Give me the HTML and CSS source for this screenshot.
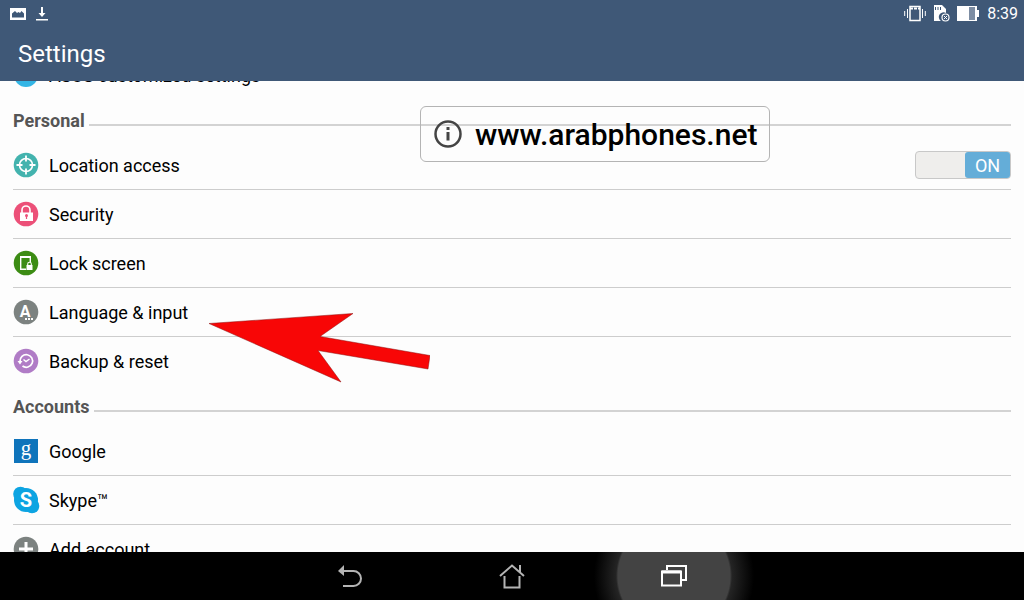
FILE: index.html
```html
<!DOCTYPE html>
<html lang="en">
<head>
    <meta charset="UTF-8">
    <meta name="viewport" content="width=device-width, initial-scale=1.0">
    <title>Settings</title>
    <link rel="stylesheet" href="styles.css">
</head>
<body>
<header class="header">
    <div class="status-bar">
        <div class="status-group">
            <svg width="16" height="12" viewBox="0 0 16 12"><path fill="#fff" fill-rule="evenodd" d="M0 0h16v12H0zM2 8.500V5.500L5 3l2 2 1.500-1L10 5l1.500-2L14 5.500v4H2z"/></svg>
            <svg width="12" height="14" viewBox="0 0 12 14"><path fill="#fff" d="M5 0h2v6h2.500L6 10 2.500 6H5zM0 12h12v1.500H0z"/></svg>
        </div>
        <div class="status-group status-right">
            <svg width="22" height="17" viewBox="0 0 22 17" fill="none" stroke="#fff">
                <rect x="6" y="1.500" width="10" height="14" stroke-width="1.500"/>
                <path d="M6 3.500h10" stroke-width="2" stroke-dasharray="3 1"/>
                <path d="M3.500 4v9M18.500 4v9M.7 6v5M21.300 6v5"/>
            </svg>
            <svg width="17" height="17" viewBox="0 0 17 17">
                <path fill="#fff" d="M1 0h8l4 4v4a4.500 4.500 0 0 0-5 8H1z"/>
                <path stroke="#3f5877" d="M2.500 2v3M5 2v3M7.500 2v3"/>
                <circle cx="12.500" cy="12.500" r="3.500" fill="none" stroke="#fff" stroke-width="1.200"/>
                <path stroke="#fff" d="M11 11l3 3M14 11l-3 3"/>
            </svg>
            <svg width="23" height="15" viewBox="0 0 23 15"><path fill="#fff" d="M0 0h20v4h2v7h-2v4H0z"/><path fill="#7d8da3" d="M12 1h6v13h-6z"/></svg>
            <time class="clock">8:39</time>
        </div>
    </div>
    <h1 class="title">Settings</h1>
</header>

<main class="content">
    <div class="list">
        <a class="row" href="#">
            <svg class="icon" viewBox="0 0 26 26"><circle cx="13" cy="13" r="12" fill="#33b5e5"/></svg>
            ASUS customized settings
        </a>

        <h2 class="section">Personal</h2>
        <div class="row">
            <svg class="icon" viewBox="0 0 26 26">
                <circle cx="13" cy="13" r="12.300" fill="#43b3ae"/>
                <circle cx="13" cy="13" r="6.500" fill="none" stroke="#fff" stroke-width="1.600"/>
                <path stroke="#fff" stroke-width="1.800" d="M13 3.500v6M13 16.500v6M3.500 13h6M16.500 13h6"/>
            </svg>
            <label for="location">Location access</label>
            <label class="switch">
                <input type="checkbox" id="location" checked>
                <span class="switch-thumb">ON</span>
            </label>
        </div>
        <a class="row" href="#">
            <svg class="icon" viewBox="0 0 26 26">
                <circle cx="13" cy="13" r="12.300" fill="#ec5078"/>
                <path fill="none" stroke="#fff" stroke-width="1.600" d="M9 12V9a4 4 0 0 1 8 0v3"/>
                <rect x="7" y="11.500" width="13" height="8.500" fill="#fff"/>
                <circle cx="13.500" cy="14.500" r="1.500" fill="#ec5078"/>
                <path stroke="#ec5078" stroke-width="1.200" d="M13.500 15v3"/>
            </svg>
            Security
        </a>
        <a class="row" href="#">
            <svg class="icon" viewBox="0 0 26 26">
                <circle cx="13" cy="13" r="12.300" fill="#3c8c14"/>
                <path fill="none" stroke="#fff" stroke-width="1.400" d="M13 19.300H7.700V6.700h9.600V12"/>
                <path stroke="#fff" stroke-width="2" d="M7.500 7h10"/>
                <path fill="none" stroke="#fff" stroke-width="1.100" d="M14.700 15v-1a1.800 1.800 0 0 1 3.600 0v1"/>
                <rect x="13.500" y="15" width="6" height="5" fill="#fff"/>
            </svg>
            Lock screen
        </a>
        <a class="row" href="#">
            <svg class="icon" viewBox="0 0 26 26">
                <circle cx="13" cy="13" r="12.300" fill="#7c8280"/>
                <text class="letter" x="12" y="18" font-size="16">A</text>
                <path stroke="#fff" stroke-width="2" stroke-dasharray="2 1" d="M12 20h8"/>
            </svg>
            Language &amp; input
        </a>
        <a class="row last" href="#">
            <svg class="icon" viewBox="0 0 26 26">
                <circle cx="13" cy="13" r="12.300" fill="#b07cc6"/>
                <path fill="none" stroke="#fff" stroke-width="1.700" d="M7 13.500a6.300 6.300 0 1 1 2.500 4.500"/>
                <path fill="#fff" d="M4.500 13h5L7 16.500z"/>
                <path fill="none" stroke="#fff" stroke-width="1.500" d="M10.500 11.500l2.500 2 3.500-2.500"/>
            </svg>
            Backup &amp; reset
        </a>

        <h2 class="section">Accounts</h2>
        <a class="row" href="#">
            <svg class="icon" viewBox="0 0 26 26">
                <rect x="1" y="1" width="24" height="24" fill="#0f74bb"/>
                <text class="letter serif" x="13" y="17" font-size="21">g</text>
            </svg>
            Google
        </a>
        <a class="row" href="#">
            <svg class="icon" viewBox="0 0 26 26">
                <circle cx="13" cy="13" r="12" fill="#0da4e2"/>
                <circle cx="7.500" cy="7" r="7.300" fill="#0da4e2"/>
                <circle cx="19" cy="19" r="7.300" fill="#0da4e2"/>
                <text class="letter" x="13" y="20" font-size="20">S</text>
            </svg>
            Skype™
        </a>
        <a class="row last" href="#">
            <svg class="icon" viewBox="0 0 26 26">
                <circle cx="13" cy="13" r="12.300" fill="#7c8280"/>
                <path stroke="#fff" stroke-width="3" d="M13 6v14M6 13h14"/>
            </svg>
            Add account
        </a>
    </div>
</main>

<nav class="nav-bar">
    <button class="nav-button" aria-label="Back">
        <svg width="26" height="24" viewBox="0 0 26 24"><path fill="#b4b4b4" d="M1 7l6-6v11z"/><path fill="none" stroke="#b4b4b4" stroke-width="2" d="M6 7h10.500a7.500 7.500 0 0 1 0 15H6"/></svg>
    </button>
    <button class="nav-button" aria-label="Home">
        <svg width="26" height="26" viewBox="0 0 26 26" fill="none" stroke="#b4b4b4" stroke-width="2"><path d="M1 13L13 2.500 25 13M21 9V2M5.500 13v11.500h15V13"/></svg>
    </button>
    <button class="nav-button active" aria-label="Recent apps">
        <svg width="26" height="22" viewBox="0 0 26 22" fill="none" stroke="#fff" stroke-width="2"><path d="M6 5V1h19v14h-4"/><rect x="1" y="6.500" width="19" height="14"/><path d="M1 7h19" stroke-width="3"/></svg>
    </button>
</nav>

<div class="watermark">
    <svg width="28" height="28" viewBox="0 0 28 28"><circle cx="14" cy="14" r="12.500" fill="none" stroke="#444" stroke-width="2.500"/><path stroke="#444" stroke-width="3" d="M14 7v3M14 12v8.500"/></svg>
    www.arabphones.net
</div>
<svg class="arrow" width="222" height="70" viewBox="0 0 222 70"><path fill="#f80606" stroke="#8b1010" stroke-width=".5" d="M1 10.500L145 .5 112 23.500 222 42.500 220 56 110 37.500 133 69z"/></svg>
</body>
</html>
```
FILE: styles.css
```css
* {
    box-sizing: border-box;
}
body {
    font-family: Roboto, sans-serif;
    margin: 0;
    height: 100vh;
    display: flex;
    flex-direction: column;
    position: relative;
    overflow: hidden;
    background-color: #fdfdfd;
    color: #000;
}
.header {
    background-color: #3f5877;
    color: #fff;
    z-index: 1;
}
.status-bar {
    display: flex;
    justify-content: space-between;
    height: 27px;
    padding: 0 6px 0 10px;
}
.status-group {
    display: flex;
    align-items: center;
    gap: 10px;
}
.status-right {
    gap: 7px;
}
.clock {
    font-size: 16px;
}
.title {
    margin: 0;
    padding: 0 18px;
    font-size: 24px;
    font-weight: 400;
    line-height: 54px;
}
.content {
    flex: 1;
    min-height: 0;
    overflow: hidden;
}
/* list is scrolled part of the way through the first row */
.list {
    margin-top: -30px;
    padding: 0 13px;
}
.section {
    display: flex;
    align-items: center;
    gap: 4px;
    height: 41px;
    margin: 0;
    color: #555;
    font-size: 18px;
    font-weight: 700;
}
.section::after {
    content: "";
    flex: 1;
    height: 2px;
    margin-top: 8px;
    background-color: #d3d3d3;
}
.row {
    display: flex;
    align-items: center;
    gap: 10px;
    height: 49px;
    border-bottom: 1px solid #cdcdcd;
    color: #000;
    font-size: 18px;
    text-decoration: none;
}
.row:first-child,
.row.last {
    border-bottom-color: transparent;
}
.icon {
    width: 26px;
    height: 26px;
    overflow: visible;
}
.letter {
    fill: #fff;
    font-family: Roboto, sans-serif;
    font-weight: 700;
    text-anchor: middle;
}
.letter.serif {
    font-family: "Liberation Serif", serif;
    font-weight: 400;
}
.switch {
    display: flex;
    justify-content: flex-end;
    position: relative;
    width: 96px;
    height: 28px;
    margin-left: auto;
    border: 1px solid #c8c8c8;
    border-radius: 4px;
    background-color: #efeeec;
}
.switch input {
    position: absolute;
    inset: 0;
    margin: 0;
    opacity: 0;
}
.switch-thumb {
    width: 45px;
    border-radius: 3px;
    background-color: #64add8;
    color: #fff;
    line-height: 28px;
    text-align: center;
}
.nav-bar {
    display: flex;
    justify-content: center;
    height: 48px;
    overflow: hidden;
    background-color: #000;
}
.nav-button {
    display: flex;
    align-items: center;
    justify-content: center;
    width: 162px;
    padding: 0;
    border: none;
    background: none;
}
.nav-button.active {
    background: radial-gradient(circle, #434343 56px, #242424 58px, #000 80px);
}
.watermark {
    position: absolute;
    top: 106px;
    left: 420px;
    display: flex;
    align-items: center;
    gap: 13px;
    height: 56px;
    padding: 0 12px 0 13px;
    border: 1px solid #b4b4b4;
    border-radius: 6px;
    font-size: 30px;
    font-weight: 500;
}
.arrow {
    position: absolute;
    top: 313px;
    left: 208px;
}
```
